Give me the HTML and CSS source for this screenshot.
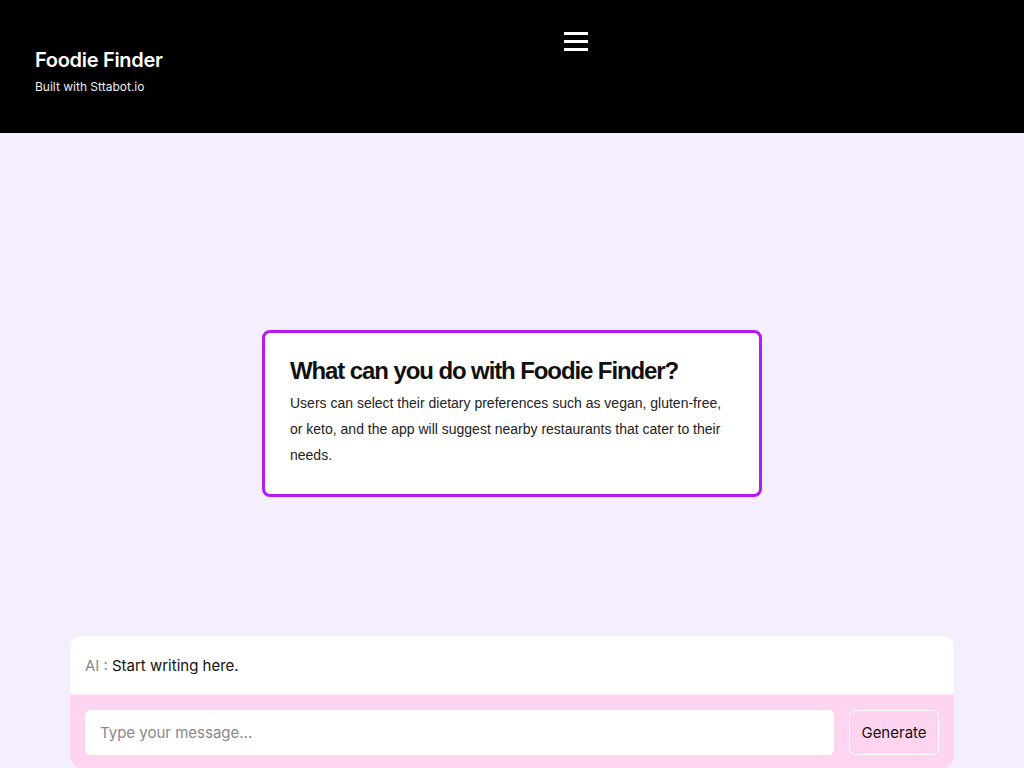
FILE: index.html
```html
<!DOCTYPE html>
<html lang="en">
<head>
  <meta charset="UTF-8">
  <title>Foodie Finder</title>
  <meta name="viewport" content="width=device-width, initial-scale=1.0">
  <link rel="stylesheet" href="styles.css">
</head>
<body>

  <header class="topbar">
    <div class="brand">
      <h1 class="brand-title">Foodie Finder</h1>
      <p class="brand-sub">Built with Sttabot.io</p>
    </div>
    <div class="menu-area">
      <button class="menu-btn" aria-label="Menu">
        <svg width="24" height="20" viewBox="0 0 24 20">
          <rect x="0" y="1" width="24" height="3" fill="#fff"/>
          <rect x="0" y="9" width="24" height="3" fill="#fff"/>
          <rect x="0" y="17" width="24" height="3" fill="#fff"/>
        </svg>
      </button>
    </div>
  </header>

  <main class="content">
    <section class="info-card">
      <h2>What can you do with Foodie Finder?</h2>
      <p>Users can select their dietary preferences such as vegan, gluten-free, or keto, and the app will suggest nearby restaurants that cater to their needs.</p>
    </section>
  </main>

  <div class="chat">
    <div class="chat-output">
      <span class="chat-label">AI :</span>
      <span class="chat-text">Start writing here.</span>
    </div>
    <form class="chat-form">
      <input type="text" class="chat-input" placeholder="Type your message...">
      <button type="submit" class="chat-btn">Generate</button>
    </form>
  </div>

</body>
</html>
```

FILE: styles.css
```css
html, body {
  height: 100%;
  overflow: hidden;
}

body {
  margin: 0;
  font-family: Inter, 'Noto Sans', sans-serif;
  background-color: #f5eefe;
}

.topbar {
  height: 133px;
  box-sizing: border-box;
  background-color: #000;
  color: #fff;
  display: flex;
  align-items: flex-start;
  padding: 0 35px;
}

.brand {
  padding-top: 47px;
}

.brand-title {
  margin: 0;
  font-size: 20px;
  font-weight: 600;
  line-height: 26px;
  letter-spacing: -0.3px;
}

.brand-sub {
  margin: 6px 0 0;
  font-size: 12px;
  line-height: 15px;
  color: #eee;
}

.menu-area {
  flex: 1;
  display: flex;
  justify-content: center;
  padding-top: 31px;
}

.menu-btn {
  background: none;
  border: none;
  padding: 0;
  cursor: pointer;
  display: block;
}

.menu-btn svg {
  display: block;
}

.content {
  height: 503px;
  box-sizing: border-box;
  padding-top: 197px;
}

.info-card {
  width: 500px;
  box-sizing: border-box;
  margin: 0 auto;
  background-color: #fff;
  border: 3px solid #b41af2;
  border-radius: 8px;
  padding: 23px 25px 26px;
  font-family: 'Liberation Sans', Arial, sans-serif;
}

.info-card h2 {
  margin: 0;
  font-size: 24px;
  line-height: 30px;
  font-weight: bold;
  letter-spacing: -1.1px;
  color: #111;
}

.info-card p {
  margin: 4px 0 0;
  font-size: 14px;
  line-height: 26px;
  color: #222;
}

.chat {
  width: 884px;
  margin: 0 auto;
  border-radius: 12px;
  overflow: hidden;
  background-color: #fff;
}

.chat-output {
  height: 58px;
  box-sizing: border-box;
  padding: 0 15px;
  display: flex;
  align-items: center;
  gap: 4px;
  font-size: 15px;
}

.chat-label {
  color: #888;
}

.chat-text {
  color: #111;
}

.chat-form {
  margin: 0;
  background-color: #fdd5f1;
  display: flex;
  gap: 15px;
  padding: 15px 15px 13px;
  border-top: 1px solid #fce6f6;
}

.chat-input {
  flex: 1;
  height: 45px;
  box-sizing: border-box;
  border: none;
  border-radius: 6px;
  padding: 0 15px;
  font-family: Inter, sans-serif;
  font-size: 15px;
  background-color: #fff;
  outline: none;
}

.chat-input::placeholder {
  color: #888;
}

.chat-btn {
  width: 90px;
  height: 45px;
  box-sizing: border-box;
  border: 1px solid #fff;
  border-radius: 6px;
  background-color: #fdd5f1;
  font-family: Inter, sans-serif;
  font-size: 15px;
  color: #111;
  cursor: pointer;
}
```
